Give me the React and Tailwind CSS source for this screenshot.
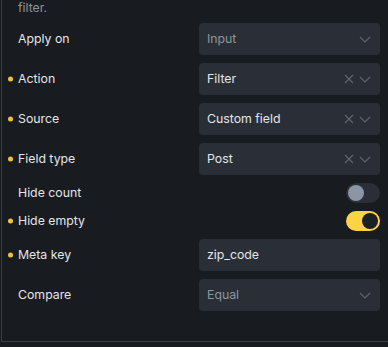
import React from "react";

const Chevron = () => (
  <svg width="12" height="7" viewBox="0 0 12 7" fill="none" className="shrink-0">
    <path d="M1 1l5 5 5-5" stroke="#5d6470" strokeWidth="1.2" />
  </svg>
);
const Cross = () => (
  <svg width="10" height="10" viewBox="0 0 10 10" fill="none" className="shrink-0">
    <path d="M1 1l8 8M9 1l-8 8" stroke="#5d6470" strokeWidth="1.2" />
  </svg>
);

const Dot = () => <span className="absolute left-[-10px] top-1/2 -translate-y-1/2 w-[5px] h-[5px] rounded-full bg-[#f5c33b]" />;

function Label({ text, req }) {
  return (
    <div className="relative w-[181px] text-[12.3px] text-[#e4e6e9]">
      {req && <Dot />}
      {text}
    </div>
  );
}

function Select({ value, clear, muted }) {
  return (
    <div className="w-[181px] h-[32px] rounded-[4px] bg-[#2a2f37] flex items-center pl-2 pr-[9px]">
      <span className={"flex-1 text-[12.3px] " + (muted ? "text-[#8e949c]" : "text-[#e4e6e9]")}>{value}</span>
      {clear && (
        <span className="mr-[5px] flex items-center">
          <Cross />
        </span>
      )}
      <Chevron />
    </div>
  );
}

function Toggle({ on }) {
  return on ? (
    <div className="w-[34px] h-[20px] rounded-full bg-[#fdd346] flex items-center justify-end pr-[2px]">
      <div className="w-[16px] h-[16px] rounded-full bg-[#1c1f24]" />
    </div>
  ) : (
    <div className="w-[34px] h-[20px] rounded-full bg-[#2a2f37] flex items-center pl-[2px]">
      <div className="w-[16px] h-[16px] rounded-full bg-[#8a96a6]" />
    </div>
  );
}

function Row({ label, req, children, h }) {
  return (
    <div className={"flex items-center " + h}>
      <Label text={label} req={req} />
      <div className="w-[181px] flex justify-end">{children}</div>
    </div>
  );
}

export default function App() {
  return (
    <div className="w-[388px] h-[347px] bg-[#181b1f] overflow-hidden" style={{ fontFamily: "Inter, 'Noto Sans', sans-serif" }}>
      <div className="ml-[1px] h-[344px] border-l border-b border-[#3a3f46] pl-[16px]">
        <p className="-mt-[2px] mb-[5px] h-[20px] leading-[20px] text-[12.3px] text-[#8e949c]">filter.</p>
        <div className="flex flex-col gap-2">
          <Row label="Apply on" h="h-[32px]"><Select value="Input" muted /></Row>
          <Row label="Action" req h="h-[32px]"><Select value="Filter" clear /></Row>
          <Row label="Source" req h="h-[32px]"><Select value="Custom field" clear /></Row>
          <Row label="Field type" req h="h-[32px]"><Select value="Post" clear /></Row>
          <Row label="Hide count" h="h-[20px]"><Toggle /></Row>
          <Row label="Hide empty" req h="h-[20px]"><Toggle on /></Row>
          <Row label="Meta key" req h="h-[32px]">
            <div className="w-[181px] h-[32px] rounded-[4px] bg-[#2a2f37] flex items-center pl-2 text-[12.3px] text-[#e4e6e9]">zip_code</div>
          </Row>
          <Row label="Compare" h="h-[32px]"><Select value="Equal" muted /></Row>
        </div>
      </div>
    </div>
  );
}
